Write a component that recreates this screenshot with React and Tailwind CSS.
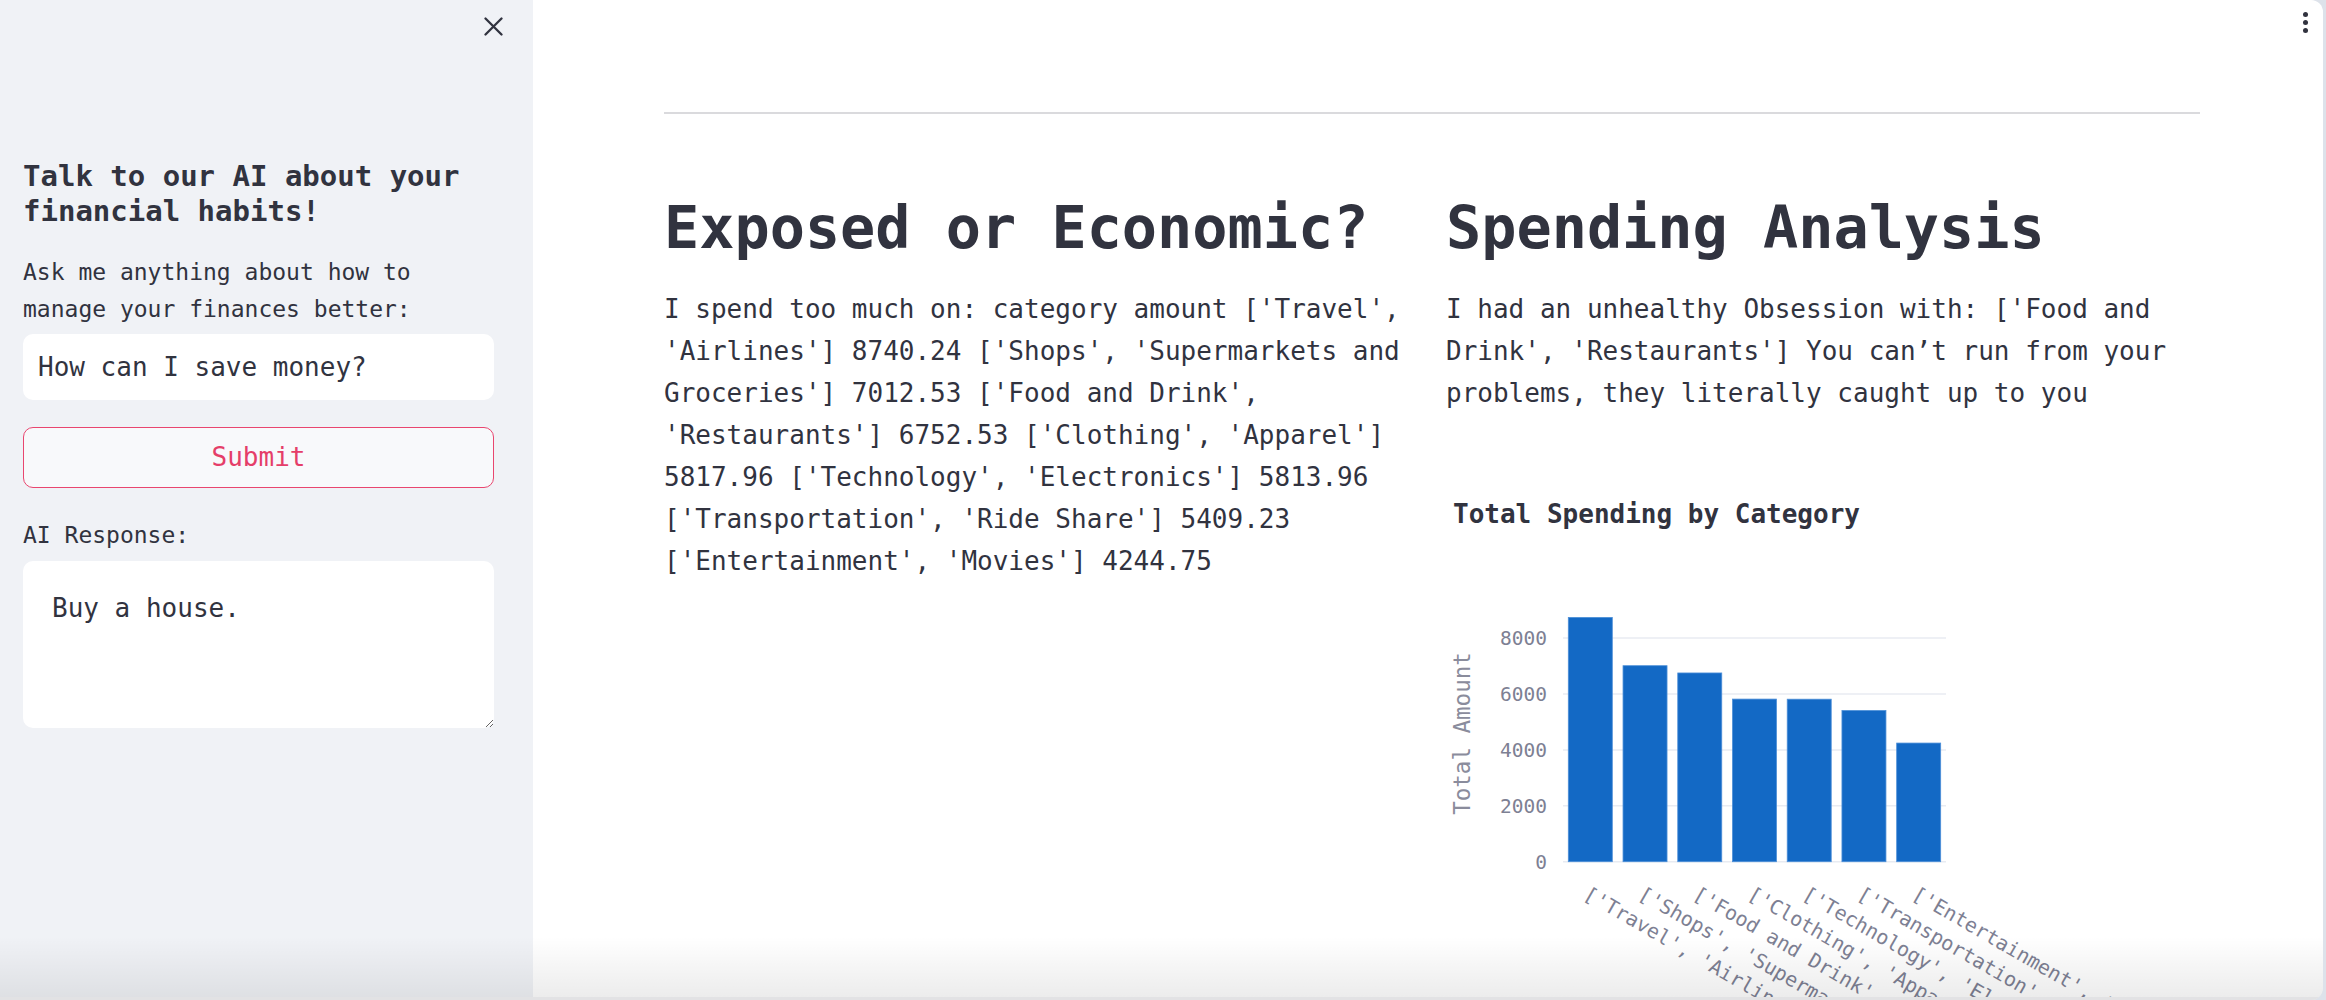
import React from "react";

const categories = [
    ["['Travel', 'Airlines']", 8740.24],
    ["['Shops', 'Supermarkets and Groceries']", 7012.53],
    ["['Food and Drink', 'Restaurants']", 6752.53],
    ["['Clothing', 'Apparel']", 5817.96],
    ["['Technology', 'Electronics']", 5813.96],
    ["['Transportation', 'Ride Share']", 5409.23],
    ["['Entertainment', 'Movies']", 4244.75],
];

// plot geometry, in svg px
const BASE_Y = 316.7;
const PX_PER_UNIT = 0.02795;
const BAR_X0 = 122.3;
const BAR_PITCH = 54.73;
const BAR_W = 44;

function SpendingChart() {
    const ticks = [0, 2000, 4000, 6000, 8000];
    return (
        <svg width="754" height="460" className="block overflow-visible">
            {ticks.map(t => {
                const y = BASE_Y - t * PX_PER_UNIT;
                return (
                    <g key={t}>
                        <line x1="117" x2="500" y1={y} y2={y} stroke="#e8ebf2" strokeWidth="1.5" />
                        <text x="101" y={y + 7} textAnchor="end" fontSize="19.5" fill="#7d8093">
                            {t}
                        </text>
                    </g>
                );
            })}

            {categories.map(([label, amount], i) => {
                const x = BAR_X0 + i * BAR_PITCH;
                const h = amount * PX_PER_UNIT;
                return (
                    <rect
                        key={label}
                        x={x}
                        y={BASE_Y - h}
                        width={BAR_W}
                        height={h}
                        fill="#1369c5"
                        stroke="#4d8fd8"
                        strokeWidth="0.8"
                    />
                );
            })}

            {categories.map(([label], i) => {
                const lx = BAR_X0 + i * BAR_PITCH + BAR_W / 2 - 8;
                const ly = 353;
                return (
                    <text
                        key={label}
                        x={lx}
                        y={ly}
                        transform={`rotate(30 ${lx} ${ly})`}
                        fontSize="20"
                        fill="#7d8093"
                    >
                        {label}
                    </text>
                );
            })}

            <text
                x="24"
                y="188.5"
                transform="rotate(-90 24 188.5)"
                textAnchor="middle"
                fontSize="22.5"
                fill="#8a8c9c"
            >
                Total Amount
            </text>
        </svg>
    );
}

export default function App() {
    return (
        <div className="h-screen w-full overflow-hidden bg-[#dde2ea] flex font-['DejaVu_Sans_Mono','Liberation_Mono',monospace] text-[#31333f]">
            <div className="relative flex flex-1 mr-[3px] overflow-hidden rounded-r-[12px] bg-white">
                {/* sidebar */}
                <aside className="w-[533px] shrink-0 bg-[#f0f2f6]">
                    <div className="h-[52px] flex items-center justify-end pr-[30px]">
                        <button className="text-[#31333f]">
                            <svg width="19" height="19" viewBox="0 0 19 19" className="block">
                                <path d="M1.5 1.5 17.5 17.5M17.5 1.5 1.5 17.5" stroke="currentColor" strokeWidth="2.3" strokeLinecap="round" />
                            </svg>
                        </button>
                    </div>

                    <div className="pl-[23px] pr-[39px]">
                        <h3 className="mt-[107px] text-[29px] leading-[35px] font-bold">
                            Talk to our AI about your financial habits!
                        </h3>

                        <p className="mt-[25px] text-[23px] leading-[37px]">
                            Ask me anything about how to manage your finances better:
                        </p>
                        <input
                            defaultValue="How can I save money?"
                            className="mt-[6px] block w-full h-[66px] rounded-[10px] bg-white px-[15px] text-[26px] text-[#31333f] outline-none"
                        />

                        <button className="mt-[27px] w-full h-[61px] rounded-[10px] border-[1.5px] border-[#e9466f] bg-[#f8f9fb] text-[26px] text-[#e53e69]">
                            Submit
                        </button>

                        <p className="mt-[29px] text-[23px] leading-[37px]">AI Response:</p>
                        <textarea
                            defaultValue="Buy a house."
                            className="mt-[7px] block w-full h-[167px] rounded-[10px] bg-white pt-[26px] pl-[29px] pr-[12px] text-[26px] leading-[42px] text-[#31333f] outline-none"
                        />
                    </div>
                </aside>

                {/* main */}
                <main className="flex-1 pt-[112px] pl-[131px] pr-[123px]">
                    <div className="h-[2px] bg-[#dadadd]" />

                    <div className="mt-[80px] grid grid-cols-2 gap-x-[28px]">
                        <section>
                            <h1 className="text-[58.5px] leading-[68px] font-bold">Exposed or Economic?</h1>
                            <p className="mt-[26px] text-[26px] leading-[42px]">
                                I spend too much on: category amount ['Travel', 'Airlines'] 8740.24 ['Shops', 'Supermarkets and Groceries'] 7012.53 ['Food and Drink', 'Restaurants'] 6752.53 ['Clothing', 'Apparel'] 5817.96 ['Technology', 'Electronics'] 5813.96 ['Transportation', 'Ride Share'] 5409.23 ['Entertainment', 'Movies'] 4244.75
                            </p>
                        </section>

                        <section>
                            <h1 className="text-[58.5px] leading-[68px] font-bold">Spending Analysis</h1>
                            <p className="mt-[26px] text-[26px] leading-[42px]">
                                I had an unhealthy Obsession with: ['Food and Drink', 'Restaurants'] You can’t run from your problems, they literally caught up to you
                            </p>

                            <h4 className="mt-[79px] pl-[7px] text-[26px] leading-[42px] font-bold">
                                Total Spending by Category
                            </h4>
                            <div className="mt-[10px]">
                                <SpendingChart />
                            </div>
                        </section>
                    </div>
                </main>

                {/* header menu */}
                <div className="absolute top-[12px] right-[15px] flex flex-col gap-[3px]">
                    <span className="w-[5px] h-[5px] rounded-full bg-[#31333f]" />
                    <span className="w-[5px] h-[5px] rounded-full bg-[#31333f]" />
                    <span className="w-[5px] h-[5px] rounded-full bg-[#31333f]" />
                </div>

                {/* bottom shade */}
                <div className="pointer-events-none absolute inset-x-0 bottom-0 h-[64px] bg-linear-to-b from-transparent to-[rgba(0,0,0,0.08)]" />
                <div className="pointer-events-none absolute inset-x-0 bottom-0 h-[3px] bg-[#e2e2e4]" />
            </div>
        </div>
    );
}
